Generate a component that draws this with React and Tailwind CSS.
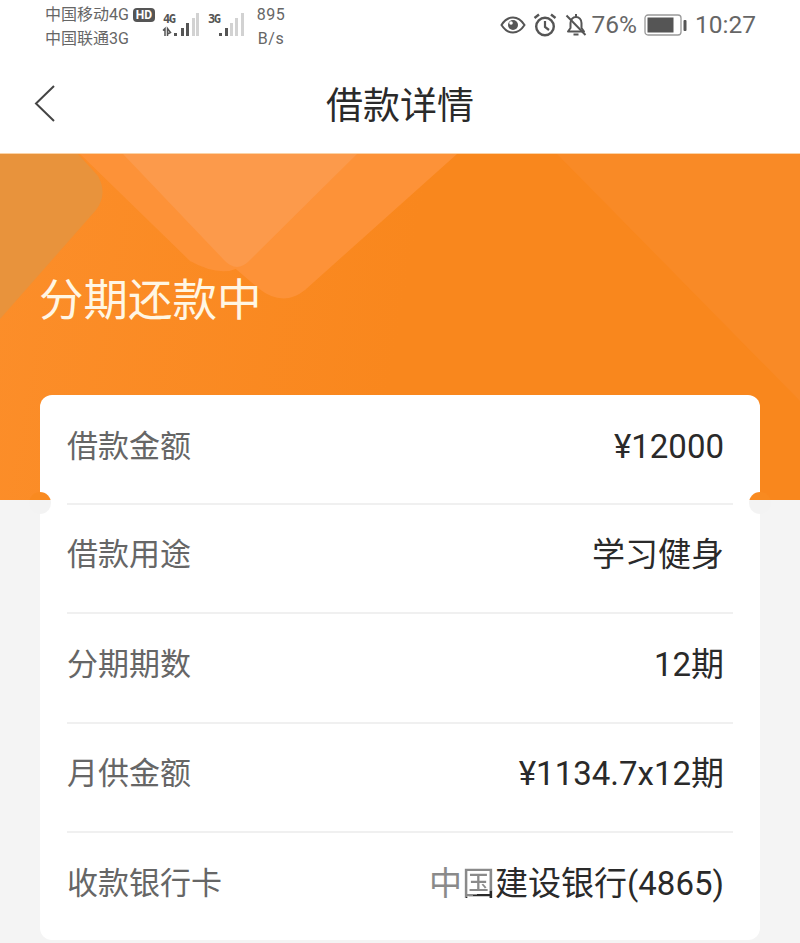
import React from "react";

const font = { fontFamily: 'Roboto, "Noto Sans CJK SC", sans-serif' };

function Signal({ label, activity, xs, dark }) {
  const hs = [3, 8, 13, 18, 23];
  return (
    <svg width="38" height="28" viewBox="0 0 38 28" className="shrink-0">
      <text x="1" y="12" fontSize="12" fontWeight="700" fill="#555" fontFamily="'DejaVu Sans Mono', monospace" textLength="13">{label}</text>
      {activity && (
        <path d="M3 25V17.500L1 19.500M5.500 25V17.500L8.500 21.500L5.500 23" fill="none" stroke="#555" strokeWidth="1.500" />
      )}
      {xs.map((x, i) => (
        <rect key={i} x={x} y={25 - hs[i]} width="3" height={hs[i]} fill={i < dark ? "#555" : "#d2d2d2"} />
      ))}
    </svg>
  );
}

function StatusBar() {
  return (
    <div className="flex h-[60px] items-start justify-between bg-white text-[#666]">
      <div className="flex items-start pl-[45px]">
        <div className="w-[88px] pt-[3px] text-[16px] leading-[24px]">
          <div className="whitespace-nowrap">中国移动4G</div>
          <div className="whitespace-nowrap">中国联通3G</div>
        </div>
        <div className="mt-[8px] flex h-[14px] w-[22px] items-center justify-center rounded-[4px] bg-[#555] text-[12px] font-bold leading-none text-white">HD</div>
        <div className="ml-[7px] mt-[11px] flex gap-[7px]">
          <Signal label="4G" activity xs={[12, 19, 24, 30, 34]} dark={3} />
          <Signal label="3G" xs={[12, 18, 23, 28, 34]} dark={2} />
        </div>
        <div className="ml-[11px] mt-[3px] w-[30px] text-center text-[16px] leading-[24px] tracking-[0.5px]">
          <div>895</div>
          <div>B/s</div>
        </div>
      </div>
      <div className="mr-[44px] mt-[11px] flex h-[28px] items-center text-[24.500px] leading-none">
        <svg width="26" height="20" viewBox="0 0 26 20" className="mr-[7px]">
          <path d="M1.500 10C5 4.500 9 2.500 13 2.500S21 4.500 24.500 10C21 15.500 17 17.500 13 17.500S5 15.500 1.500 10Z" fill="none" stroke="#555" strokeWidth="2" />
          <circle cx="13" cy="10" r="5" fill="#555" />
          <circle cx="11" cy="8" r="1.800" fill="#fff" />
        </svg>
        <svg width="24" height="24" viewBox="0 0 24 24" className="mr-[8px]">
          <circle cx="12" cy="13.500" r="8.800" fill="none" stroke="#555" strokeWidth="2.400" />
          <path d="M12 8v6l4 3" fill="none" stroke="#555" strokeWidth="2.200" />
          <path d="M1.500 5L6 1.500M22.500 5L18 1.500" stroke="#555" strokeWidth="2.400" />
        </svg>
        <svg width="22" height="24" viewBox="0 0 22 24" className="mr-[5px]">
          <path d="M3 18.500h16l-2.500-3.500V10c0-3.500-2.500-6-5.500-6S5.500 6.500 5.500 10v5Z" fill="none" stroke="#555" strokeWidth="2" strokeLinejoin="round" />
          <path d="M11 1v3M8.500 21.500h5M1.500 2.500L20.500 22" stroke="#555" strokeWidth="2" />
        </svg>
        <span>76%</span>
        <svg width="43" height="22" viewBox="0 0 43 22" className="ml-[7px] mr-[8px]">
          <rect x="1" y="1" width="36" height="20" rx="3" fill="none" stroke="#999" strokeWidth="1.300" />
          <rect x="3.500" y="3.500" width="26" height="15" fill="#555" />
          <rect x="39.500" y="6" width="3" height="11" rx="1" fill="#555" />
        </svg>
        <span>10:27</span>
      </div>
    </div>
  );
}

function NavBar() {
  return (
    <div className="relative flex h-[93px] items-center justify-center bg-white">
      <svg width="24" height="40" viewBox="0 0 24 40" className="absolute left-[33px] top-[24px]">
        <path d="M21 2L3 19.500L21 37" fill="none" stroke="#444" strokeWidth="2" />
      </svg>
      <div className="text-[37px] leading-none text-[#2a2a2a]">借款详情</div>
    </div>
  );
}

function HeroDecor() {
  return (
    <svg width="800" height="347" viewBox="0 0 800 347" className="absolute inset-0">
      <path d="M557 0H800V247Z" fill="#f98a26" />
      <path d="M80 0H457L305 136Q283 154 258 134L230 110Z" fill="#fd9238" />
      <path d="M80 0H357L250 106Q228 128 190 107Z" fill="#fd9238" />
      <path d="M123 0H357L250 106Q237 120 224 106Z" fill="#fc9a4b" />
      <path d="M0 0H78L98 22Q108 40 96 56L0 165Z" fill="#e8933c" />
    </svg>
  );
}

function Notch({ side }) {
  return (
    <div
      className={
        "absolute top-[97px] h-[22px] w-[22px] rounded-full bg-[linear-gradient(#f98a20_0,#f98a20_8px,#f3f3f3_8px)] " +
        (side === "left" ? "left-[-11px]" : "right-[-11px]")
      }
    />
  );
}

function Row({ label, height, children }) {
  return (
    <div className={"flex items-center justify-between pb-[5px] pl-[27px] pr-[36px] " + height}>
      <span className="text-[31px] leading-none text-[#666]">{label}</span>
      <span className="text-[33px] leading-none text-[#2a2a2a]">{children}</span>
    </div>
  );
}

function Divider() {
  return <div className="mx-[27px] -mb-[2px] h-[2px] bg-[#f0f0f0]" />;
}

export default function App() {
  return (
    <div style={font} className="h-[943px] w-[800px] overflow-hidden bg-[#f4f4f4]">
      <StatusBar />
      <NavBar />
      <div className="relative h-[347px] overflow-hidden border-t border-[#fbd3a6] bg-[linear-gradient(100deg,#fc8e2a,#f9871d_50%,#f9871d)]">
        <HeroDecor />
        <div className="relative pl-[39px] pt-[125px] text-[44.500px] leading-none text-[#fff6e4]">分期还款中</div>
      </div>
      <div className="relative mx-[40px] -mt-[105px] h-[545px] rounded-[12px] bg-white">
        <Notch side="left" />
        <Notch side="right" />
        <Row label="借款金额" height="h-[107.500px]">¥12000</Row>
        <Divider />
        <Row label="借款用途" height="h-[109.500px]">学习健身</Row>
        <Divider />
        <Row label="分期期数" height="h-[109.500px]">12期</Row>
        <Divider />
        <Row label="月供金额" height="h-[109.500px]">¥1134.7x12期</Row>
        <Divider />
        <Row label="收款银行卡" height="h-[109px]">
          <span className="text-[#8a8a8a]">中</span>
          <span className="bg-[linear-gradient(165deg,#8a8a8a_0,#8a8a8a_72%,#2a2a2a_72%)] bg-clip-text text-transparent">国</span>
          建设银行(4865)
        </Row>
      </div>
    </div>
  );
}
